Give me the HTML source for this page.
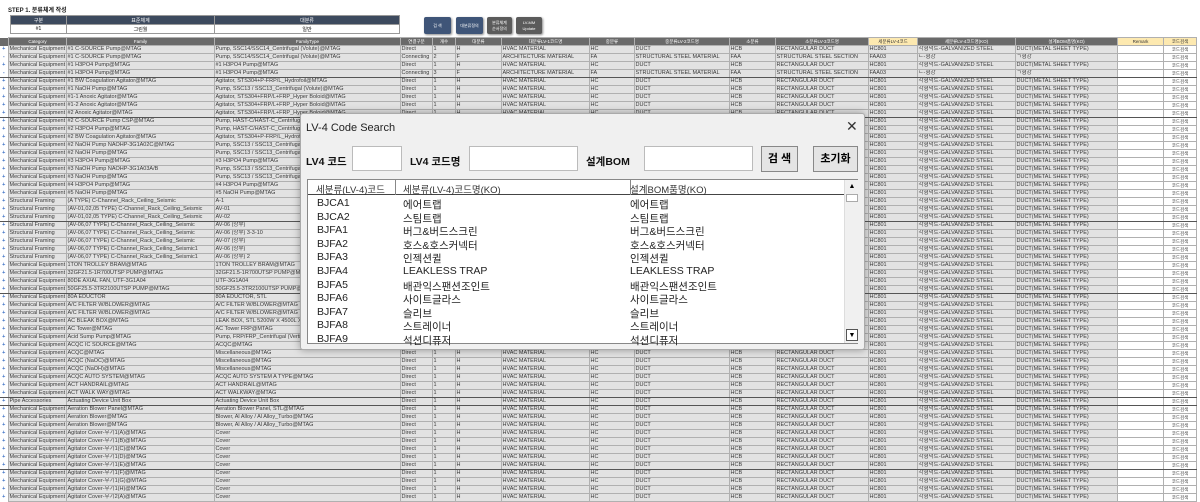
<!DOCTYPE html>
<html><head><meta charset="utf-8">
<style>
*{box-sizing:border-box;margin:0;padding:0}
body{width:1200px;height:490px;overflow:hidden;background:#fff;font-family:"Liberation Sans","Noto Sans CJK KR",sans-serif;position:relative}
.step{position:absolute;left:8px;top:5px;font-size:6px;font-weight:bold;color:#222}
.top{position:absolute;left:10px;top:15px;width:390px;border-collapse:collapse;table-layout:fixed}
.top td{font-size:5px;height:9px;text-align:center;border:1px solid #999}
.top tr.h td{background:#3d4a5e;color:#fff}
.btn{position:absolute;top:17px;height:17px;border-radius:2px;color:#fff;font-size:4px;text-align:center;line-height:17px;box-shadow:1px 1px 2px #888}
table.g{position:absolute;left:0;top:37px;border-collapse:collapse;table-layout:fixed;width:1196px}
.g td{height:8px;font-size:5.5px;line-height:7px;white-space:nowrap;overflow:hidden;border:1px solid #b0b0b0;background:#e2e2e2;color:#3a3a3a;padding-left:1px}
.g tr.hd td{background:#6a6a6a;color:#fff;text-align:center;font-size:4.5px}
.g tr.hd td.y{background:#fde9b0;color:#333}
.g td.p{background:#fff;border:none;color:#3a6fc4;font-weight:bold;text-align:center;padding:0}
.g td.w{background:#fff}
.g td.c{background:#fff;text-align:center;font-size:4.5px}
.g tr.d td{border-bottom:1px solid #555}
.dlg{position:absolute;left:300px;top:113px;width:565px;height:237px;background:#f0f0f0;border:1px solid #aaa;box-shadow:0 0 8px rgba(0,0,0,.35);border-radius:3px}
.dlg .t{position:absolute;left:5px;top:8px;font-size:11px;color:#222}
.dlg .x{position:absolute;left:545px;top:4px;font-size:14px;color:#333}
.lb{position:absolute;top:40px;font-size:10.5px;font-weight:bold;color:#111}
.in{position:absolute;top:32px;height:25px;background:#fff;border:1px solid #bbb}
.bt{position:absolute;top:32px;height:26px;background:#e4e4e4;border:1px solid #888;font-size:11px;font-weight:bold;text-align:center;line-height:24px}
.list{position:absolute;left:6px;top:65px;width:551px;height:165px;background:#fff;border:1px solid #888}
.list .hd{position:absolute;left:0;top:0;width:536px;height:15px;border-bottom:1px solid #444;font-size:9.5px;color:#333}
.list .hd span{position:absolute;top:2px;white-space:nowrap}
.sep{position:absolute;top:0;height:15px;border-left:1px solid #888}
.r{position:absolute;left:0;font-size:10.5px;color:#222;height:13px}
.r span{position:absolute;white-space:nowrap}
.sb{position:absolute;left:536px;top:0;width:14px;height:163px;background:#f0f0f0;border-left:1px solid #ddd}
</style></head><body>
<div class="step">STEP 1. 분류체계 작성</div>
<table class="top"><colgroup><col style="width:56px"><col style="width:148px"><col></colgroup>
<tr class="h"><td>구분</td><td>표준체계</td><td>대분류</td></tr>
<tr><td>#1</td><td>그린월</td><td>일반</td></tr></table>
<div class="btn" style="left:424px;width:27px;background:#3f5578">검 색</div>
<div class="btn" style="left:456px;width:27px;background:#3f5578">대분류정의</div>
<div class="btn" style="left:487px;width:25px;background:#5b5b5b;line-height:6px;padding-top:3px">분류체계<br>순서정의</div>
<div class="btn" style="left:516px;width:26px;background:#5b5b5b;line-height:6px;padding-top:3px">LV-MM<br>Update</div>

<table class="g"><colgroup><col style="width:8px"><col style="width:58px"><col style="width:148px"><col style="width:186px"><col style="width:32px"><col style="width:23px"><col style="width:46px"><col style="width:88px"><col style="width:45px"><col style="width:95px"><col style="width:46px"><col style="width:93px"><col style="width:49px"><col style="width:98px"><col style="width:102px"><col style="width:46px"><col style="width:33px"></colgroup>
<tr class="hd"><td class="p"></td><td>Category</td><td>Family</td><td>FamilyType</td><td>연결구분</td><td>개수</td><td>대분류</td><td>대분류LV-1코드명</td><td>중분류</td><td>중분류LV-2코드명</td><td>소분류</td><td>소분류LV-3코드명</td><td class="y">세분류LV-4코드</td><td>세분류LV-4코드명(KO)</td><td>설계BOM품명(KO)</td><td class="y">Remark</td><td class="y">코드검색</td></tr>
<tr><td class="p">+</td><td>Mechanical Equipment</td><td>#1 C-SOURCE Pump@MTAG</td><td>Pump, SSC14/SSC14_Centrifugal (Volute)@MTAG</td><td>Direct</td><td>1</td><td>H</td><td>HVAC MATERIAL</td><td>HC</td><td>DUCT</td><td>HCB</td><td>RECTANGULAR DUCT</td><td>HC801</td><td>각형덕트-GALVANIZED STEEL</td><td>DUCT(METAL SHEET TYPE)</td><td class="w"></td><td class="c">코드검색</td></tr>
<tr><td class="p">-</td><td>Mechanical Equipment</td><td>#1 C-SOURCE Pump@MTAG</td><td>Pump, SSC14/SSC14_Centrifugal (Volute)@MTAG</td><td>Connecting</td><td>2</td><td>F</td><td>ARCHITECTURE MATERIAL</td><td>FA</td><td>STRUCTURAL STEEL MATERIAL</td><td>FAA</td><td>STRUCTURAL STEEL SECTION</td><td>FAA03</td><td>ㄴ-형강</td><td>ㄱ형강</td><td class="w"></td><td class="c">코드검색</td></tr>
<tr><td class="p">+</td><td>Mechanical Equipment</td><td>#1 H3PO4 Pump@MTAG</td><td>#1 H3PO4 Pump@MTAG</td><td>Direct</td><td>1</td><td>H</td><td>HVAC MATERIAL</td><td>HC</td><td>DUCT</td><td>HCB</td><td>RECTANGULAR DUCT</td><td>HC801</td><td>각형덕트-GALVANIZED STEEL</td><td>DUCT(METAL SHEET TYPE)</td><td class="w"></td><td class="c">코드검색</td></tr>
<tr class="d"><td class="p">-</td><td>Mechanical Equipment</td><td>#1 H3PO4 Pump@MTAG</td><td>#1 H3PO4 Pump@MTAG</td><td>Connecting</td><td>3</td><td>F</td><td>ARCHITECTURE MATERIAL</td><td>FA</td><td>STRUCTURAL STEEL MATERIAL</td><td>FAA</td><td>STRUCTURAL STEEL SECTION</td><td>FAA03</td><td>ㄴ-형강</td><td>ㄱ형강</td><td class="w"></td><td class="c">코드검색</td></tr>
<tr><td class="p">+</td><td>Mechanical Equipment</td><td>#1 BW Coagulation Agitator@MTAG</td><td>Agitator, STS304+P-FRP/L_Hydrofoil@MTAG</td><td>Direct</td><td>1</td><td>H</td><td>HVAC MATERIAL</td><td>HC</td><td>DUCT</td><td>HCB</td><td>RECTANGULAR DUCT</td><td>HC801</td><td>각형덕트-GALVANIZED STEEL</td><td>DUCT(METAL SHEET TYPE)</td><td class="w"></td><td class="c">코드검색</td></tr>
<tr><td class="p">+</td><td>Mechanical Equipment</td><td>#1 NaOH Pump@MTAG</td><td>Pump, SSC13 / SSC13_Centrifugal (Volute)@MTAG</td><td>Direct</td><td>1</td><td>H</td><td>HVAC MATERIAL</td><td>HC</td><td>DUCT</td><td>HCB</td><td>RECTANGULAR DUCT</td><td>HC801</td><td>각형덕트-GALVANIZED STEEL</td><td>DUCT(METAL SHEET TYPE)</td><td class="w"></td><td class="c">코드검색</td></tr>
<tr><td class="p">+</td><td>Mechanical Equipment</td><td>#1-1 Anoxic Agitator@MTAG</td><td>Agitator, STS304+FRP/L+FRP_Hyper Boloid@MTAG</td><td>Direct</td><td>1</td><td>H</td><td>HVAC MATERIAL</td><td>HC</td><td>DUCT</td><td>HCB</td><td>RECTANGULAR DUCT</td><td>HC801</td><td>각형덕트-GALVANIZED STEEL</td><td>DUCT(METAL SHEET TYPE)</td><td class="w"></td><td class="c">코드검색</td></tr>
<tr><td class="p">+</td><td>Mechanical Equipment</td><td>#1-2 Anoxic Agitator@MTAG</td><td>Agitator, STS304+FRP/L+FRP_Hyper Boloid@MTAG</td><td>Direct</td><td>1</td><td>H</td><td>HVAC MATERIAL</td><td>HC</td><td>DUCT</td><td>HCB</td><td>RECTANGULAR DUCT</td><td>HC801</td><td>각형덕트-GALVANIZED STEEL</td><td>DUCT(METAL SHEET TYPE)</td><td class="w"></td><td class="c">코드검색</td></tr>
<tr class="d"><td class="p">+</td><td>Mechanical Equipment</td><td>#2 Anoxic Agitator@MTAG</td><td>Agitator, STS304+FRP/L+FRP_Hyper Boloid@MTAG</td><td>Direct</td><td>1</td><td>H</td><td>HVAC MATERIAL</td><td>HC</td><td>DUCT</td><td>HCB</td><td>RECTANGULAR DUCT</td><td>HC801</td><td>각형덕트-GALVANIZED STEEL</td><td>DUCT(METAL SHEET TYPE)</td><td class="w"></td><td class="c">코드검색</td></tr>
<tr><td class="p">+</td><td>Mechanical Equipment</td><td>#2 C-SOURCE Pump CSP@MTAG</td><td>Pump, HAST-C/HAST-C_Centrifugal (Volute)@MTAG</td><td>Direct</td><td>1</td><td>H</td><td>HVAC MATERIAL</td><td>HC</td><td>DUCT</td><td>HCB</td><td>RECTANGULAR DUCT</td><td>HC801</td><td>각형덕트-GALVANIZED STEEL</td><td>DUCT(METAL SHEET TYPE)</td><td class="w"></td><td class="c">코드검색</td></tr>
<tr><td class="p">+</td><td>Mechanical Equipment</td><td>#2 H3PO4 Pump@MTAG</td><td>Pump, HAST-C/HAST-C_Centrifugal (Volute)@MTAG</td><td>Direct</td><td>1</td><td>H</td><td>HVAC MATERIAL</td><td>HC</td><td>DUCT</td><td>HCB</td><td>RECTANGULAR DUCT</td><td>HC801</td><td>각형덕트-GALVANIZED STEEL</td><td>DUCT(METAL SHEET TYPE)</td><td class="w"></td><td class="c">코드검색</td></tr>
<tr><td class="p">+</td><td>Mechanical Equipment</td><td>#2 BW Coagulation Agitator@MTAG</td><td>Agitator, STS304+P-FRP/L_Hydrofoil@MTAG</td><td>Direct</td><td>1</td><td>H</td><td>HVAC MATERIAL</td><td>HC</td><td>DUCT</td><td>HCB</td><td>RECTANGULAR DUCT</td><td>HC801</td><td>각형덕트-GALVANIZED STEEL</td><td>DUCT(METAL SHEET TYPE)</td><td class="w"></td><td class="c">코드검색</td></tr>
<tr><td class="p">+</td><td>Mechanical Equipment</td><td>#2 NaOH Pump NAOHP-3G1A02C@MTAG</td><td>Pump, SSC13 / SSC13_Centrifugal (Volute)@MTAG</td><td>Direct</td><td>1</td><td>H</td><td>HVAC MATERIAL</td><td>HC</td><td>DUCT</td><td>HCB</td><td>RECTANGULAR DUCT</td><td>HC801</td><td>각형덕트-GALVANIZED STEEL</td><td>DUCT(METAL SHEET TYPE)</td><td class="w"></td><td class="c">코드검색</td></tr>
<tr><td class="p">+</td><td>Mechanical Equipment</td><td>#2 NaOH Pump@MTAG</td><td>Pump, SSC13 / SSC13_Centrifugal (Volute)@MTAG</td><td>Direct</td><td>1</td><td>H</td><td>HVAC MATERIAL</td><td>HC</td><td>DUCT</td><td>HCB</td><td>RECTANGULAR DUCT</td><td>HC801</td><td>각형덕트-GALVANIZED STEEL</td><td>DUCT(METAL SHEET TYPE)</td><td class="w"></td><td class="c">코드검색</td></tr>
<tr><td class="p">+</td><td>Mechanical Equipment</td><td>#3 H3PO4 Pump@MTAG</td><td>#3 H3PO4 Pump@MTAG</td><td>Direct</td><td>1</td><td>H</td><td>HVAC MATERIAL</td><td>HC</td><td>DUCT</td><td>HCB</td><td>RECTANGULAR DUCT</td><td>HC801</td><td>각형덕트-GALVANIZED STEEL</td><td>DUCT(METAL SHEET TYPE)</td><td class="w"></td><td class="c">코드검색</td></tr>
<tr><td class="p">+</td><td>Mechanical Equipment</td><td>#3 NaOH Pump NAOHP-3G1A03A/B</td><td>Pump, SSC13 / SSC13_Centrifugal (Volute)@MTAG</td><td>Direct</td><td>1</td><td>H</td><td>HVAC MATERIAL</td><td>HC</td><td>DUCT</td><td>HCB</td><td>RECTANGULAR DUCT</td><td>HC801</td><td>각형덕트-GALVANIZED STEEL</td><td>DUCT(METAL SHEET TYPE)</td><td class="w"></td><td class="c">코드검색</td></tr>
<tr><td class="p">+</td><td>Mechanical Equipment</td><td>#3 NaOH Pump@MTAG</td><td>Pump, SSC13 / SSC13_Centrifugal (Volute)@MTAG</td><td>Direct</td><td>1</td><td>H</td><td>HVAC MATERIAL</td><td>HC</td><td>DUCT</td><td>HCB</td><td>RECTANGULAR DUCT</td><td>HC801</td><td>각형덕트-GALVANIZED STEEL</td><td>DUCT(METAL SHEET TYPE)</td><td class="w"></td><td class="c">코드검색</td></tr>
<tr><td class="p">+</td><td>Mechanical Equipment</td><td>#4 H3PO4 Pump@MTAG</td><td>#4 H3PO4 Pump@MTAG</td><td>Direct</td><td>1</td><td>H</td><td>HVAC MATERIAL</td><td>HC</td><td>DUCT</td><td>HCB</td><td>RECTANGULAR DUCT</td><td>HC801</td><td>각형덕트-GALVANIZED STEEL</td><td>DUCT(METAL SHEET TYPE)</td><td class="w"></td><td class="c">코드검색</td></tr>
<tr><td class="p">+</td><td>Mechanical Equipment</td><td>#5 NaOH Pump@MTAG</td><td>#5 NaOH Pump@MTAG</td><td>Direct</td><td>1</td><td>H</td><td>HVAC MATERIAL</td><td>HC</td><td>DUCT</td><td>HCB</td><td>RECTANGULAR DUCT</td><td>HC801</td><td>각형덕트-GALVANIZED STEEL</td><td>DUCT(METAL SHEET TYPE)</td><td class="w"></td><td class="c">코드검색</td></tr>
<tr><td class="p">+</td><td>Structural Framing</td><td>(A TYPE) C-Channel_Rack_Ceiling_Seismic</td><td>A-1</td><td>Direct</td><td>1</td><td>H</td><td>HVAC MATERIAL</td><td>HC</td><td>DUCT</td><td>HCB</td><td>RECTANGULAR DUCT</td><td>HC801</td><td>각형덕트-GALVANIZED STEEL</td><td>DUCT(METAL SHEET TYPE)</td><td class="w"></td><td class="c">코드검색</td></tr>
<tr><td class="p">+</td><td>Structural Framing</td><td>(AV-01,02,05 TYPE) C-Channel_Rack_Ceiling_Seismic</td><td>AV-01</td><td>Direct</td><td>1</td><td>H</td><td>HVAC MATERIAL</td><td>HC</td><td>DUCT</td><td>HCB</td><td>RECTANGULAR DUCT</td><td>HC801</td><td>각형덕트-GALVANIZED STEEL</td><td>DUCT(METAL SHEET TYPE)</td><td class="w"></td><td class="c">코드검색</td></tr>
<tr class="d"><td class="p">+</td><td>Structural Framing</td><td>(AV-01,02,05 TYPE) C-Channel_Rack_Ceiling_Seismic</td><td>AV-02</td><td>Direct</td><td>1</td><td>H</td><td>HVAC MATERIAL</td><td>HC</td><td>DUCT</td><td>HCB</td><td>RECTANGULAR DUCT</td><td>HC801</td><td>각형덕트-GALVANIZED STEEL</td><td>DUCT(METAL SHEET TYPE)</td><td class="w"></td><td class="c">코드검색</td></tr>
<tr><td class="p">+</td><td>Structural Framing</td><td>(AV-06,07 TYPE) C-Channel_Rack_Ceiling_Seismic</td><td>AV-06 (상부)</td><td>Direct</td><td>1</td><td>H</td><td>HVAC MATERIAL</td><td>HC</td><td>DUCT</td><td>HCB</td><td>RECTANGULAR DUCT</td><td>HC801</td><td>각형덕트-GALVANIZED STEEL</td><td>DUCT(METAL SHEET TYPE)</td><td class="w"></td><td class="c">코드검색</td></tr>
<tr><td class="p">+</td><td>Structural Framing</td><td>(AV-06,07 TYPE) C-Channel_Rack_Ceiling_Seismic</td><td>AV-06 (상부) 3-3-10</td><td>Direct</td><td>1</td><td>H</td><td>HVAC MATERIAL</td><td>HC</td><td>DUCT</td><td>HCB</td><td>RECTANGULAR DUCT</td><td>HC801</td><td>각형덕트-GALVANIZED STEEL</td><td>DUCT(METAL SHEET TYPE)</td><td class="w"></td><td class="c">코드검색</td></tr>
<tr><td class="p">+</td><td>Structural Framing</td><td>(AV-06,07 TYPE) C-Channel_Rack_Ceiling_Seismic</td><td>AV-07 (상부)</td><td>Direct</td><td>1</td><td>H</td><td>HVAC MATERIAL</td><td>HC</td><td>DUCT</td><td>HCB</td><td>RECTANGULAR DUCT</td><td>HC801</td><td>각형덕트-GALVANIZED STEEL</td><td>DUCT(METAL SHEET TYPE)</td><td class="w"></td><td class="c">코드검색</td></tr>
<tr><td class="p">+</td><td>Structural Framing</td><td>(AV-06,07 TYPE) C-Channel_Rack_Ceiling_Seismic1</td><td>AV-06 (상부)</td><td>Direct</td><td>1</td><td>H</td><td>HVAC MATERIAL</td><td>HC</td><td>DUCT</td><td>HCB</td><td>RECTANGULAR DUCT</td><td>HC801</td><td>각형덕트-GALVANIZED STEEL</td><td>DUCT(METAL SHEET TYPE)</td><td class="w"></td><td class="c">코드검색</td></tr>
<tr><td class="p">+</td><td>Structural Framing</td><td>(AV-06,07 TYPE) C-Channel_Rack_Ceiling_Seismic1</td><td>AV-06 (상부) 2</td><td>Direct</td><td>1</td><td>H</td><td>HVAC MATERIAL</td><td>HC</td><td>DUCT</td><td>HCB</td><td>RECTANGULAR DUCT</td><td>HC801</td><td>각형덕트-GALVANIZED STEEL</td><td>DUCT(METAL SHEET TYPE)</td><td class="w"></td><td class="c">코드검색</td></tr>
<tr><td class="p">+</td><td>Mechanical Equipment</td><td>1TON TROLLEY BRAM@MTAG</td><td>1TON TROLLEY BRAM@MTAG</td><td>Direct</td><td>1</td><td>H</td><td>HVAC MATERIAL</td><td>HC</td><td>DUCT</td><td>HCB</td><td>RECTANGULAR DUCT</td><td>HC801</td><td>각형덕트-GALVANIZED STEEL</td><td>DUCT(METAL SHEET TYPE)</td><td class="w"></td><td class="c">코드검색</td></tr>
<tr><td class="p">+</td><td>Mechanical Equipment</td><td>32GF21.5-1R700UTSP PUMP@MTAG</td><td>32GF21.5-1R700UTSP PUMP@MTAG</td><td>Direct</td><td>1</td><td>H</td><td>HVAC MATERIAL</td><td>HC</td><td>DUCT</td><td>HCB</td><td>RECTANGULAR DUCT</td><td>HC801</td><td>각형덕트-GALVANIZED STEEL</td><td>DUCT(METAL SHEET TYPE)</td><td class="w"></td><td class="c">코드검색</td></tr>
<tr><td class="p">+</td><td>Mechanical Equipment</td><td>80DE AXIAL FAN, UTF-3G1A04</td><td>UTF-3G1A04</td><td>Direct</td><td>1</td><td>H</td><td>HVAC MATERIAL</td><td>HC</td><td>DUCT</td><td>HCB</td><td>RECTANGULAR DUCT</td><td>HC801</td><td>각형덕트-GALVANIZED STEEL</td><td>DUCT(METAL SHEET TYPE)</td><td class="w"></td><td class="c">코드검색</td></tr>
<tr class="d"><td class="p">+</td><td>Mechanical Equipment</td><td>50GF25.5-3TR2100UTSP PUMP@MTAG</td><td>50GF25.5-3TR2100UTSP PUMP@MTAG</td><td>Direct</td><td>1</td><td>H</td><td>HVAC MATERIAL</td><td>HC</td><td>DUCT</td><td>HCB</td><td>RECTANGULAR DUCT</td><td>HC801</td><td>각형덕트-GALVANIZED STEEL</td><td>DUCT(METAL SHEET TYPE)</td><td class="w"></td><td class="c">코드검색</td></tr>
<tr><td class="p">+</td><td>Mechanical Equipment</td><td>80A EDUCTOR</td><td>80A EDUCTOR, STL</td><td>Direct</td><td>1</td><td>H</td><td>HVAC MATERIAL</td><td>HC</td><td>DUCT</td><td>HCB</td><td>RECTANGULAR DUCT</td><td>HC801</td><td>각형덕트-GALVANIZED STEEL</td><td>DUCT(METAL SHEET TYPE)</td><td class="w"></td><td class="c">코드검색</td></tr>
<tr><td class="p">+</td><td>Mechanical Equipment</td><td>A/C FILTER W/BLOWER@MTAG</td><td>A/C FILTER W/BLOWER@MTAG</td><td>Direct</td><td>1</td><td>H</td><td>HVAC MATERIAL</td><td>HC</td><td>DUCT</td><td>HCB</td><td>RECTANGULAR DUCT</td><td>HC801</td><td>각형덕트-GALVANIZED STEEL</td><td>DUCT(METAL SHEET TYPE)</td><td class="w"></td><td class="c">코드검색</td></tr>
<tr><td class="p">+</td><td>Mechanical Equipment</td><td>A/C FILTER W/BLOWER@MTAG</td><td>A/C FILTER W/BLOWER@MTAG</td><td>Direct</td><td>1</td><td>H</td><td>HVAC MATERIAL</td><td>HC</td><td>DUCT</td><td>HCB</td><td>RECTANGULAR DUCT</td><td>HC801</td><td>각형덕트-GALVANIZED STEEL</td><td>DUCT(METAL SHEET TYPE)</td><td class="w"></td><td class="c">코드검색</td></tr>
<tr><td class="p">+</td><td>Mechanical Equipment</td><td>AC BLEAK BOX@MTAG</td><td>LEAK BOX, STL 5200W X 4500L X 1000H</td><td>Direct</td><td>1</td><td>H</td><td>HVAC MATERIAL</td><td>HC</td><td>DUCT</td><td>HCB</td><td>RECTANGULAR DUCT</td><td>HC801</td><td>각형덕트-GALVANIZED STEEL</td><td>DUCT(METAL SHEET TYPE)</td><td class="w"></td><td class="c">코드검색</td></tr>
<tr><td class="p">+</td><td>Mechanical Equipment</td><td>AC Tower@MTAG</td><td>AC Tower FRP@MTAG</td><td>Direct</td><td>1</td><td>H</td><td>HVAC MATERIAL</td><td>HC</td><td>DUCT</td><td>HCB</td><td>RECTANGULAR DUCT</td><td>HC801</td><td>각형덕트-GALVANIZED STEEL</td><td>DUCT(METAL SHEET TYPE)</td><td class="w"></td><td class="c">코드검색</td></tr>
<tr><td class="p">+</td><td>Mechanical Equipment</td><td>Acid Sump Pump@MTAG</td><td>Pump, FRP/FRP_Centrifugal (Vertical)@MTAG</td><td>Direct</td><td>1</td><td>H</td><td>HVAC MATERIAL</td><td>HC</td><td>DUCT</td><td>HCB</td><td>RECTANGULAR DUCT</td><td>HC801</td><td>각형덕트-GALVANIZED STEEL</td><td>DUCT(METAL SHEET TYPE)</td><td class="w"></td><td class="c">코드검색</td></tr>
<tr><td class="p">+</td><td>Mechanical Equipment</td><td>ACQC IC SOURCE@MTAG</td><td>ACQC@MTAG</td><td>Direct</td><td>1</td><td>H</td><td>HVAC MATERIAL</td><td>HC</td><td>DUCT</td><td>HCB</td><td>RECTANGULAR DUCT</td><td>HC801</td><td>각형덕트-GALVANIZED STEEL</td><td>DUCT(METAL SHEET TYPE)</td><td class="w"></td><td class="c">코드검색</td></tr>
<tr><td class="p">+</td><td>Mechanical Equipment</td><td>ACQC@MTAG</td><td>Miscellaneous@MTAG</td><td>Direct</td><td>1</td><td>H</td><td>HVAC MATERIAL</td><td>HC</td><td>DUCT</td><td>HCB</td><td>RECTANGULAR DUCT</td><td>HC801</td><td>각형덕트-GALVANIZED STEEL</td><td>DUCT(METAL SHEET TYPE)</td><td class="w"></td><td class="c">코드검색</td></tr>
<tr><td class="p">+</td><td>Mechanical Equipment</td><td>ACQC (NaOC)@MTAG</td><td>Miscellaneous@MTAG</td><td>Direct</td><td>1</td><td>H</td><td>HVAC MATERIAL</td><td>HC</td><td>DUCT</td><td>HCB</td><td>RECTANGULAR DUCT</td><td>HC801</td><td>각형덕트-GALVANIZED STEEL</td><td>DUCT(METAL SHEET TYPE)</td><td class="w"></td><td class="c">코드검색</td></tr>
<tr><td class="p">+</td><td>Mechanical Equipment</td><td>ACQC (NaOH)@MTAG</td><td>Miscellaneous@MTAG</td><td>Direct</td><td>1</td><td>H</td><td>HVAC MATERIAL</td><td>HC</td><td>DUCT</td><td>HCB</td><td>RECTANGULAR DUCT</td><td>HC801</td><td>각형덕트-GALVANIZED STEEL</td><td>DUCT(METAL SHEET TYPE)</td><td class="w"></td><td class="c">코드검색</td></tr>
<tr><td class="p">+</td><td>Mechanical Equipment</td><td>ACQC AUTO SYSTEM@MTAG</td><td>ACQC AUTO SYSTEM A TYPE@MTAG</td><td>Direct</td><td>1</td><td>H</td><td>HVAC MATERIAL</td><td>HC</td><td>DUCT</td><td>HCB</td><td>RECTANGULAR DUCT</td><td>HC801</td><td>각형덕트-GALVANIZED STEEL</td><td>DUCT(METAL SHEET TYPE)</td><td class="w"></td><td class="c">코드검색</td></tr>
<tr><td class="p">+</td><td>Mechanical Equipment</td><td>ACT HANDRAIL@MTAG</td><td>ACT HANDRAIL@MTAG</td><td>Direct</td><td>1</td><td>H</td><td>HVAC MATERIAL</td><td>HC</td><td>DUCT</td><td>HCB</td><td>RECTANGULAR DUCT</td><td>HC801</td><td>각형덕트-GALVANIZED STEEL</td><td>DUCT(METAL SHEET TYPE)</td><td class="w"></td><td class="c">코드검색</td></tr>
<tr class="d"><td class="p">+</td><td>Mechanical Equipment</td><td>ACT WALK WAY@MTAG</td><td>ACT WALKWAY@MTAG</td><td>Direct</td><td>1</td><td>H</td><td>HVAC MATERIAL</td><td>HC</td><td>DUCT</td><td>HCB</td><td>RECTANGULAR DUCT</td><td>HC801</td><td>각형덕트-GALVANIZED STEEL</td><td>DUCT(METAL SHEET TYPE)</td><td class="w"></td><td class="c">코드검색</td></tr>
<tr class="d"><td class="p">+</td><td>Pipe Accessories</td><td>Actuating Device Unit Box</td><td>Actuating Device Unit Box</td><td>Direct</td><td>1</td><td>H</td><td>HVAC MATERIAL</td><td>HC</td><td>DUCT</td><td>HCB</td><td>RECTANGULAR DUCT</td><td>HC801</td><td>각형덕트-GALVANIZED STEEL</td><td>DUCT(METAL SHEET TYPE)</td><td class="w"></td><td class="c">코드검색</td></tr>
<tr><td class="p">+</td><td>Mechanical Equipment</td><td>Aeration Blower Panel@MTAG</td><td>Aeration Blower Panel, STL@MTAG</td><td>Direct</td><td>1</td><td>H</td><td>HVAC MATERIAL</td><td>HC</td><td>DUCT</td><td>HCB</td><td>RECTANGULAR DUCT</td><td>HC801</td><td>각형덕트-GALVANIZED STEEL</td><td>DUCT(METAL SHEET TYPE)</td><td class="w"></td><td class="c">코드검색</td></tr>
<tr><td class="p">+</td><td>Mechanical Equipment</td><td>Aeration Blower@MTAG</td><td>Blower, Al Alloy / Al Alloy_Turbo@MTAG</td><td>Direct</td><td>1</td><td>H</td><td>HVAC MATERIAL</td><td>HC</td><td>DUCT</td><td>HCB</td><td>RECTANGULAR DUCT</td><td>HC801</td><td>각형덕트-GALVANIZED STEEL</td><td>DUCT(METAL SHEET TYPE)</td><td class="w"></td><td class="c">코드검색</td></tr>
<tr><td class="p">+</td><td>Mechanical Equipment</td><td>Aeration Blower@MTAG</td><td>Blower, Al Alloy / Al Alloy_Turbo@MTAG</td><td>Direct</td><td>1</td><td>H</td><td>HVAC MATERIAL</td><td>HC</td><td>DUCT</td><td>HCB</td><td>RECTANGULAR DUCT</td><td>HC801</td><td>각형덕트-GALVANIZED STEEL</td><td>DUCT(METAL SHEET TYPE)</td><td class="w"></td><td class="c">코드검색</td></tr>
<tr><td class="p">+</td><td>Mechanical Equipment</td><td>Agitator Cover-무기1(A)@MTAG</td><td>Cover</td><td>Direct</td><td>1</td><td>H</td><td>HVAC MATERIAL</td><td>HC</td><td>DUCT</td><td>HCB</td><td>RECTANGULAR DUCT</td><td>HC801</td><td>각형덕트-GALVANIZED STEEL</td><td>DUCT(METAL SHEET TYPE)</td><td class="w"></td><td class="c">코드검색</td></tr>
<tr><td class="p">+</td><td>Mechanical Equipment</td><td>Agitator Cover-무기1(B)@MTAG</td><td>Cover</td><td>Direct</td><td>1</td><td>H</td><td>HVAC MATERIAL</td><td>HC</td><td>DUCT</td><td>HCB</td><td>RECTANGULAR DUCT</td><td>HC801</td><td>각형덕트-GALVANIZED STEEL</td><td>DUCT(METAL SHEET TYPE)</td><td class="w"></td><td class="c">코드검색</td></tr>
<tr><td class="p">+</td><td>Mechanical Equipment</td><td>Agitator Cover-무기1(C)@MTAG</td><td>Cover</td><td>Direct</td><td>1</td><td>H</td><td>HVAC MATERIAL</td><td>HC</td><td>DUCT</td><td>HCB</td><td>RECTANGULAR DUCT</td><td>HC801</td><td>각형덕트-GALVANIZED STEEL</td><td>DUCT(METAL SHEET TYPE)</td><td class="w"></td><td class="c">코드검색</td></tr>
<tr><td class="p">+</td><td>Mechanical Equipment</td><td>Agitator Cover-무기1(D)@MTAG</td><td>Cover</td><td>Direct</td><td>1</td><td>H</td><td>HVAC MATERIAL</td><td>HC</td><td>DUCT</td><td>HCB</td><td>RECTANGULAR DUCT</td><td>HC801</td><td>각형덕트-GALVANIZED STEEL</td><td>DUCT(METAL SHEET TYPE)</td><td class="w"></td><td class="c">코드검색</td></tr>
<tr class="d"><td class="p">+</td><td>Mechanical Equipment</td><td>Agitator Cover-무기1(E)@MTAG</td><td>Cover</td><td>Direct</td><td>1</td><td>H</td><td>HVAC MATERIAL</td><td>HC</td><td>DUCT</td><td>HCB</td><td>RECTANGULAR DUCT</td><td>HC801</td><td>각형덕트-GALVANIZED STEEL</td><td>DUCT(METAL SHEET TYPE)</td><td class="w"></td><td class="c">코드검색</td></tr>
<tr><td class="p">+</td><td>Mechanical Equipment</td><td>Agitator Cover-무기1(F)@MTAG</td><td>Cover</td><td>Direct</td><td>1</td><td>H</td><td>HVAC MATERIAL</td><td>HC</td><td>DUCT</td><td>HCB</td><td>RECTANGULAR DUCT</td><td>HC801</td><td>각형덕트-GALVANIZED STEEL</td><td>DUCT(METAL SHEET TYPE)</td><td class="w"></td><td class="c">코드검색</td></tr>
<tr><td class="p">+</td><td>Mechanical Equipment</td><td>Agitator Cover-무기1(G)@MTAG</td><td>Cover</td><td>Direct</td><td>1</td><td>H</td><td>HVAC MATERIAL</td><td>HC</td><td>DUCT</td><td>HCB</td><td>RECTANGULAR DUCT</td><td>HC801</td><td>각형덕트-GALVANIZED STEEL</td><td>DUCT(METAL SHEET TYPE)</td><td class="w"></td><td class="c">코드검색</td></tr>
<tr><td class="p">+</td><td>Mechanical Equipment</td><td>Agitator Cover-무기1(H)@MTAG</td><td>Cover</td><td>Direct</td><td>1</td><td>H</td><td>HVAC MATERIAL</td><td>HC</td><td>DUCT</td><td>HCB</td><td>RECTANGULAR DUCT</td><td>HC801</td><td>각형덕트-GALVANIZED STEEL</td><td>DUCT(METAL SHEET TYPE)</td><td class="w"></td><td class="c">코드검색</td></tr>
<tr><td class="p">+</td><td>Mechanical Equipment</td><td>Agitator Cover-무기2(A)@MTAG</td><td>Cover</td><td>Direct</td><td>1</td><td>H</td><td>HVAC MATERIAL</td><td>HC</td><td>DUCT</td><td>HCB</td><td>RECTANGULAR DUCT</td><td>HC801</td><td>각형덕트-GALVANIZED STEEL</td><td>DUCT(METAL SHEET TYPE)</td><td class="w"></td><td class="c">코드검색</td></tr>
</table>

<div class="dlg">
<div class="t">LV-4 Code Search</div>
<div class="x">✕</div>
<div class="lb" style="left:5px">LV4 코드</div>
<div class="in" style="left:51px;width:50px"></div>
<div class="lb" style="left:109px">LV4 코드명</div>
<div class="in" style="left:168px;width:109px"></div>
<div class="lb" style="left:285px">설계BOM</div>
<div class="in" style="left:343px;width:109px"></div>
<div class="bt" style="left:460px;width:37px">검 색</div>
<div class="bt" style="left:512px;width:45px">초기화</div>
<div class="list">
<div class="hd"><span style="left:8px">세분류(LV-4)코드</span><div class="sep" style="left:87px"></div><span style="left:95px">세분류(LV-4)코드명(KO)</span><div class="sep" style="left:322px"></div><span style="left:322px">설계BOM품명(KO)</span></div>
<div class="r" style="top:17px"><span style="left:9px">BJCA1</span><span style="left:95px">에어트랩</span><span style="left:322px">에어트랩</span></div>
<div class="r" style="top:30.6px"><span style="left:9px">BJCA2</span><span style="left:95px">스팀트랩</span><span style="left:322px">스팀트랩</span></div>
<div class="r" style="top:44.2px"><span style="left:9px">BJFA1</span><span style="left:95px">버그&amp;버드스크린</span><span style="left:322px">버그&amp;버드스크린</span></div>
<div class="r" style="top:57.8px"><span style="left:9px">BJFA2</span><span style="left:95px">호스&amp;호스커넥터</span><span style="left:322px">호스&amp;호스커넥터</span></div>
<div class="r" style="top:71.4px"><span style="left:9px">BJFA3</span><span style="left:95px">인젝션퀼</span><span style="left:322px">인젝션퀼</span></div>
<div class="r" style="top:85px"><span style="left:9px">BJFA4</span><span style="left:95px">LEAKLESS TRAP</span><span style="left:322px">LEAKLESS TRAP</span></div>
<div class="r" style="top:98.6px"><span style="left:9px">BJFA5</span><span style="left:95px">배관익스팬션조인트</span><span style="left:322px">배관익스팬션조인트</span></div>
<div class="r" style="top:112.2px"><span style="left:9px">BJFA6</span><span style="left:95px">사이트글라스</span><span style="left:322px">사이트글라스</span></div>
<div class="r" style="top:125.8px"><span style="left:9px">BJFA7</span><span style="left:95px">슬리브</span><span style="left:322px">슬리브</span></div>
<div class="r" style="top:139.4px"><span style="left:9px">BJFA8</span><span style="left:95px">스트레이너</span><span style="left:322px">스트레이너</span></div>
<div class="r" style="top:153px"><span style="left:9px">BJFA9</span><span style="left:95px">석션디퓨저</span><span style="left:322px">석션디퓨저</span></div>
<div class="sb"><div style="position:absolute;left:1px;top:1px;width:12px;height:12px;font-size:7px;text-align:center;line-height:12px">▲</div><div style="position:absolute;left:1px;top:14px;width:12px;height:8px;background:#fff;border:1px solid #aaa"></div><div style="position:absolute;left:1px;top:149px;width:12px;height:12px;font-size:7px;text-align:center;line-height:12px;border:1px solid #555;background:#fff">▼</div></div>
</div>
</div>
</body></html>
